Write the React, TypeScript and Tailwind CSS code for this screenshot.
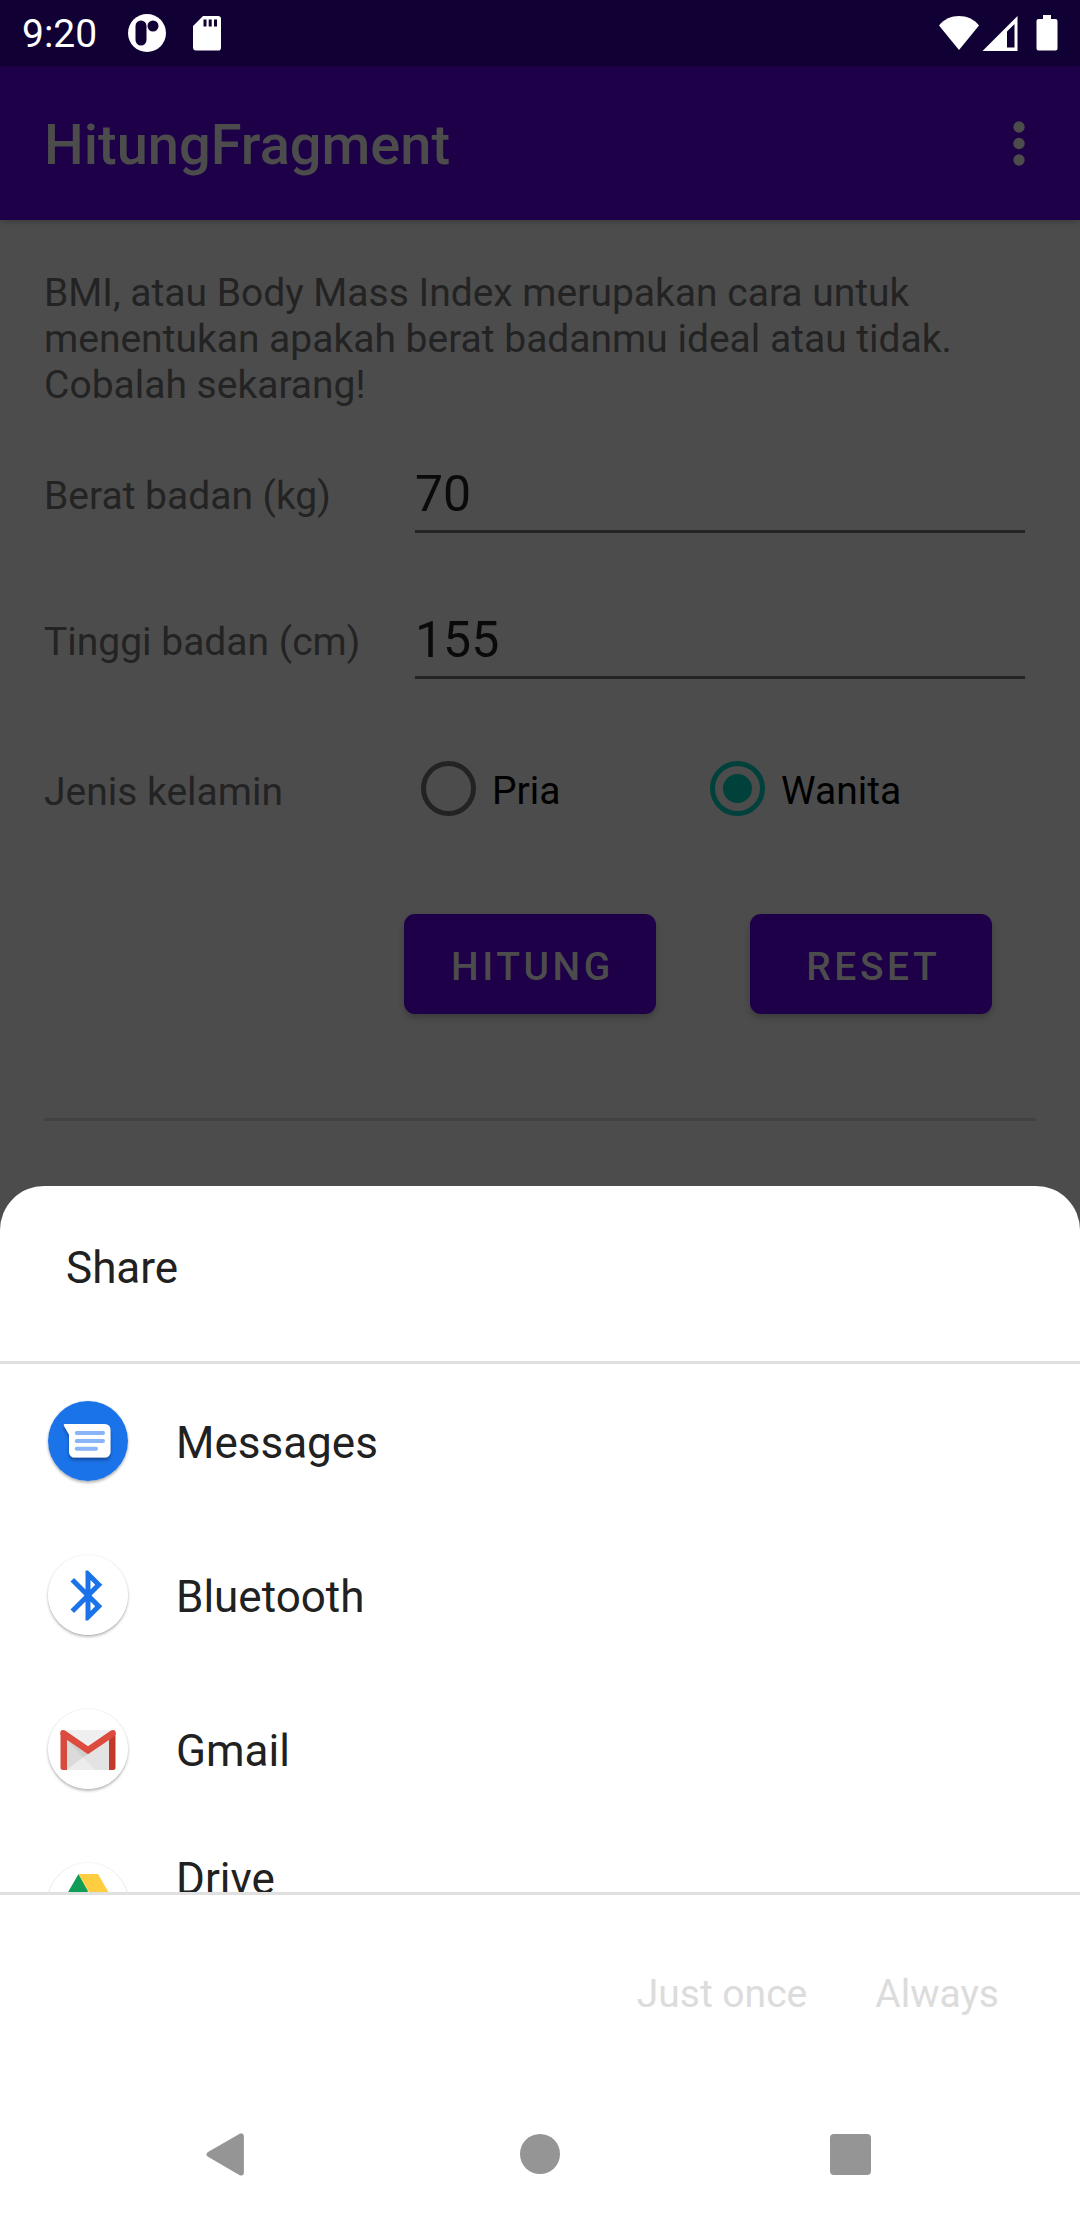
import type { ReactNode } from 'react';

function StatusBar() {
  return (
    <div className="flex h-[66px] items-center justify-between bg-[#110034] px-[22px] text-white">
      <div className="flex items-center">
        <span className="pt-0.5 text-[39px] leading-[46px]">9:20</span>
        <svg className="ml-[30px] h-10 w-10" viewBox="0 0 40 40" aria-hidden="true">
          <circle cx="20" cy="20" r="19" fill="#fff" />
          <rect x="8.5" y="7.5" width="11" height="25" rx="5.5" fill="#110034" />
          <circle cx="26" cy="13" r="5.5" fill="#110034" />
        </svg>
        <svg className="ml-[25px] h-9 w-[30px]" viewBox="0 0 30 36" aria-hidden="true">
          <path
            d="M11 1h15a3 3 0 0 1 3 3v29a2.500 2.500 0 0 1-3 2.500H4a3 3 0 0 1-3-2.500V11z"
            fill="#fff"
          />
          <path d="M11.500 4.500h3v7h-3zM16.700 4.500h3v7h-3zM22 4.500h3v7h-3z" fill="#110034" />
        </svg>
      </div>
      <div className="flex items-center">
        <svg className="h-9 w-[42px]" viewBox="0 0 42 36" aria-hidden="true">
          <path d="M21 35 1 10.500C6 4 13.500 1 21 1s15 3 20 9.500z" fill="#fff" />
        </svg>
        <svg className="ml-0.5 h-9 w-9" viewBox="0 0 36 36" aria-hidden="true">
          <path d="M35.500 1v35H.5zM32.500 9 25 16.500V32.500h7.500z" fill="#fff" fillRule="evenodd" />
        </svg>
        <svg className="ml-[18px] h-9 w-[22px]" viewBox="0 0 22 36" aria-hidden="true">
          <path d="M7 0h8v4h4.500a2 2 0 0 1 2 2v27.500a2 2 0 0 1-2 2h-17a2 2 0 0 1-2-2V6a2 2 0 0 1 2-2H7z" fill="#fff" />
        </svg>
      </div>
    </div>
  );
}

function AppBar() {
  return (
    <header className="flex h-[154px] items-center justify-between bg-[#1d0047] pt-1 pl-11 pr-[39px] text-[#4c4c4c] shadow-[0_2px_6px_rgba(0,0,0,0.2)]">
      <h1 className="text-[56px] leading-[64px] font-medium">HitungFragment</h1>
      <button type="button" aria-label="More options" className="flex h-16 w-11 items-center justify-center pb-1">
        <svg className="h-12 w-3" viewBox="0 0 12 48" fill="currentColor" aria-hidden="true">
          <circle cx="6" cy="8" r="5.700" />
          <circle cx="6" cy="24.500" r="5.700" />
          <circle cx="6" cy="41" r="5.700" />
        </svg>
      </button>
    </header>
  );
}

function NumberField({ id, label, value }: { id: string; label: string; value: string }) {
  return (
    <div className="flex items-center pr-[11px]">
      <label htmlFor={id} className="w-[371px] shrink-0 pb-1.5">
        {label}
      </label>
      <input
        id={id}
        type="text"
        inputMode="numeric"
        defaultValue={value}
        className="h-[68px] min-w-0 flex-1 rounded-none border-b-[3px] border-[#232323] bg-transparent pb-[7px] text-[50px] leading-[58px] text-[#0a0a0a] outline-none"
      />
    </div>
  );
}

function GenderOption({ label, checked }: { label: string; checked?: boolean }) {
  return (
    <label className="flex w-[289px] items-center gap-4 text-black">
      <input
        type="radio"
        name="gender"
        defaultChecked={checked}
        className="size-[55px] appearance-none rounded-full border-[5px] border-[#232323] bg-clip-content p-2 checked:border-[#01413b] checked:bg-[#01413b]"
      />
      <span className="pt-1">{label}</span>
    </label>
  );
}

function RaisedButton({ children }: { children: ReactNode }) {
  return (
    <button
      type="button"
      className="h-[100px] min-w-[242px] rounded-[11px] bg-[#1d0047] pt-1.5 pr-[42px] pl-[47px] font-medium tracking-[0.09em] text-[#4c4c4c] shadow-[0_4px_6px_rgba(0,0,0,0.2)]"
    >
      {children}
    </button>
  );
}

function MessagesIcon() {
  return (
    <svg className="size-20" viewBox="0 0 80 80" aria-hidden="true">
      <defs>
        <filter id="bubbleShadow" x="-20%" y="-20%" width="140%" height="150%">
          <feDropShadow dx="0" dy="2.500" stdDeviation="1.800" floodColor="#0b2f66" floodOpacity="0.600" />
        </filter>
      </defs>
      <circle cx="40" cy="40" r="40" fill="#1a73e8" />
      <path
        d="M16.500 23H57a5.500 5.500 0 0 1 5.500 5.500V51a5.500 5.500 0 0 1-5.500 5.500H26.500A5.500 5.500 0 0 1 21 51V33.500L15.800 24.500Q15.500 23 16.500 23z"
        fill="#fff"
        filter="url(#bubbleShadow)"
      />
      <path d="M28.700 32H55M28.700 40H55M28.700 47.800H48" stroke="#8ab4f8" strokeWidth="4" strokeLinecap="round" />
    </svg>
  );
}

function BluetoothIcon() {
  return (
    <svg className="size-20" viewBox="0 0 80 80" aria-hidden="true">
      <circle cx="40" cy="40" r="40" fill="#fff" />
      <path
        transform="translate(10 10.500) scale(2.500)"
        d="M17.710 7.710 12 2h-1v7.590L6.410 5 5 6.410 10.590 12 5 17.590 6.410 19 11 14.410V22h1l5.710-5.710-4.300-4.290 4.300-4.290zM13 5.830l1.880 1.880L13 9.590V5.830zm1.880 10.460L13 18.170v-3.760l1.880 1.880z"
        fill="#1a73e8"
      />
    </svg>
  );
}

function GmailIcon() {
  return (
    <svg className="size-20" viewBox="0 0 80 80" aria-hidden="true">
      <circle cx="40" cy="40" r="40" fill="#fff" />
      <path d="M16 21h48v40H16z" fill="#e3e3e3" />
      <path d="M16 21h48L40 38z" fill="#efefef" />
      <path d="M18.500 31 35 48.500 18.500 61z" fill="#dadada" />
      <path d="M18.500 31 40 45l-5 3.500z" fill="#cfcfcf" />
      <path d="M35 48.500 48 61H18.500z" fill="#ececec" />
      <path d="M12.500 24v34.500a2.500 2.500 0 0 0 2.500 2.500h4V29z" fill="#d54b3d" />
      <path d="M67.500 24v34.500a2.500 2.500 0 0 1-2.500 2.500h-4V29z" fill="#c0392b" />
      <path
        d="M15 21c1 0 1.600.2 2.400.8L40 37.200l22.600-15.400c.8-.6 1.400-.8 2.400-.8a2.700 2.700 0 0 1 2.700 2.700c0 1.900-.6 3-2 4L40 45.300 14.300 27.700c-1.400-1-2-2.100-2-4A2.700 2.700 0 0 1 15 21z"
        fill="#dd4b3e"
      />
    </svg>
  );
}

function DriveIcon() {
  return (
    <svg className="size-20" viewBox="0 0 80 80" aria-hidden="true">
      <circle cx="40" cy="40" r="40" fill="#fff" />
      <path d="M30.500 11 10 46.500 20 63 40 28z" fill="#0f9d58" />
      <path d="M30.500 11H50l20.500 35.500H51z" fill="#ffcd40" />
      <path d="M30 46.500h40.500L61 63H20z" fill="#4285f4" />
    </svg>
  );
}

function TargetRow({ icon, title, twoLine }: { icon: ReactNode; title: string; twoLine?: boolean }) {
  return (
    <li>
      <button type="button" className="flex h-[154px] w-full items-center gap-12 px-12 text-left">
        <span className="size-20 shrink-0 rounded-full shadow-[0_2px_3px_rgba(0,0,0,0.28),0_0_2px_rgba(0,0,0,0.12)]">
          {icon}
        </span>
        <span className={`pt-1 text-[44px] leading-[52px] text-[#212121] ${twoLine ? 'h-[108px]' : ''}`}>{title}</span>
      </button>
    </li>
  );
}

function ShareSheet() {
  return (
    <section aria-label="Share" className="rounded-t-[44px] bg-white">
      <h2 className="border-b-[3px] border-[#e0e0e0] px-[66px] pt-[56px] pb-[67px] text-[44px] leading-[52px] text-[#212121]">
        Share
      </h2>
      <ul className="h-[528px] overflow-hidden">
        <TargetRow icon={<MessagesIcon />} title="Messages" />
        <TargetRow icon={<BluetoothIcon />} title="Bluetooth" />
        <TargetRow icon={<GmailIcon />} title="Gmail" />
        <TargetRow icon={<DriveIcon />} title="Drive" twoLine />
      </ul>
      <div className="flex h-[196px] items-center justify-end gap-[68px] border-t-[3px] border-[#e0e0e0] pt-1 pr-[81px] text-[#dcdcdc]">
        <button type="button" disabled>
          Just once
        </button>
        <button type="button" disabled>
          Always
        </button>
      </div>
      <nav className="grid h-[132px] grid-cols-3 px-[72px]">
        <button type="button" aria-label="Back" className="flex items-center justify-center">
          <svg className="size-12" viewBox="0 0 48 48" aria-hidden="true">
            <path
              d="M4 24.500 38.500 4.500V44.500z"
              transform="translate(1.700 1.900) scale(0.920)"
              fill="#959595"
              stroke="#959595"
              strokeWidth="6"
              strokeLinejoin="round"
            />
          </svg>
        </button>
        <button type="button" aria-label="Home" className="flex items-center justify-center">
          <svg className="size-12" viewBox="0 0 48 48" aria-hidden="true">
            <circle cx="24" cy="24" r="20" fill="#959595" />
          </svg>
        </button>
        <button type="button" aria-label="Overview" className="flex items-center justify-center">
          <svg className="size-12" viewBox="0 0 48 48" aria-hidden="true">
            <rect x="2" y="4" width="41" height="41" rx="4" fill="#959595" />
          </svg>
        </button>
      </nav>
    </section>
  );
}

export default function App() {
  return (
    <div className="flex min-h-screen flex-col bg-[#4c4c4c] font-[Roboto,sans-serif] text-[39px] leading-[46px] text-[#232323]">
      <StatusBar />
      <AppBar />
      <main className="flex flex-1 flex-col px-11 pt-[50px] pb-16">
        <p>
          BMI, atau Body Mass Index merupakan cara untuk menentukan apakah berat badanmu ideal atau tidak. Cobalah
          sekarang!
        </p>
        <form className="flex flex-col">
          <div className="mt-[57px] flex flex-col gap-[78px]">
            <NumberField id="weight" label="Berat badan (kg)" value="70" />
            <NumberField id="height" label="Tinggi badan (cm)" value="155" />
          </div>
          <div role="radiogroup" aria-labelledby="gender-label" className="mt-[82px] flex items-center">
            <span id="gender-label" className="w-[377px] shrink-0 pt-1.5">
              Jenis kelamin
            </span>
            <GenderOption label="Pria" />
            <GenderOption label="Wanita" checked />
          </div>
          <div className="mt-[98px] flex gap-[94px] pl-[360px]">
            <RaisedButton>HITUNG</RaisedButton>
            <RaisedButton>RESET</RaisedButton>
          </div>
        </form>
        <hr className="mt-[104px] border-t-[3px] border-[#424242]" />
      </main>
      <ShareSheet />
    </div>
  );
}
